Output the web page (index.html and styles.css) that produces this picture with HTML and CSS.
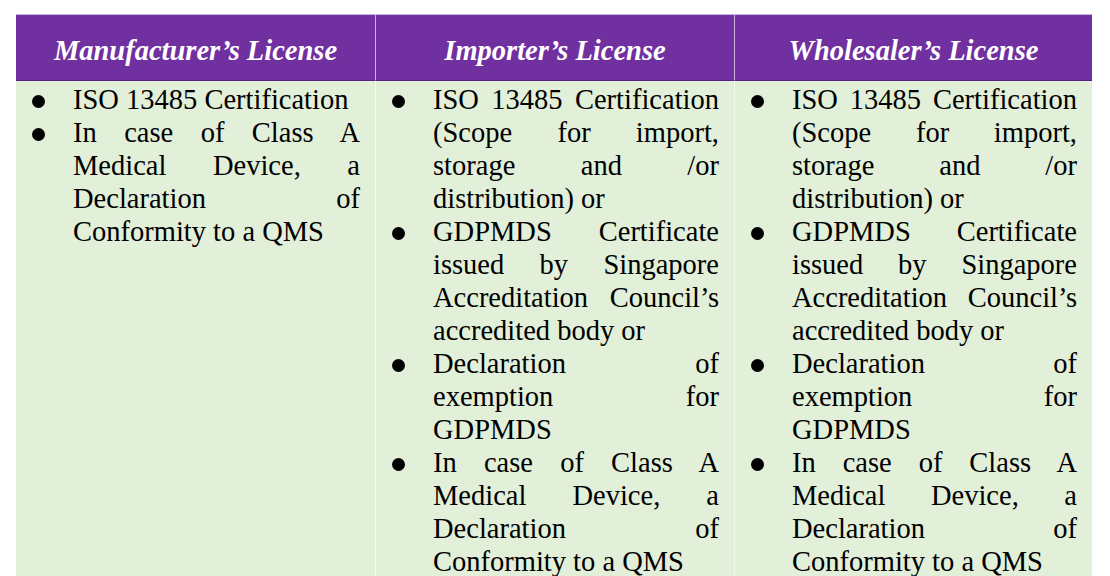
FILE: index.html
```html
<!DOCTYPE html>
<html lang="en">
<head>
<meta charset="utf-8">
<title>License Requirements</title>
<link rel="stylesheet" href="styles.css">
</head>
<body>
<div class="table">
  <div class="head">Manufacturer’s License</div>
  <div class="head sep">Importer’s License</div>
  <div class="head sep">Wholesaler’s License</div>

  <div class="cell">
    <ul class="list">
      <li>ISO 13485 Certification</li>
      <li>In case of Class A Medical Device, a Declaration of Conformity to a QMS</li>
    </ul>
  </div>
  <div class="cell sep">
    <ul class="list">
      <li>ISO 13485 Certification (Scope for import, storage and /or distribution) or</li>
      <li>GDPMDS Certificate issued by Singapore Accreditation Council’s accredited body or</li>
      <li>Declaration of exemption for GDPMDS</li>
      <li>In case of Class A Medical Device, a Declaration of Conformity to a QMS</li>
    </ul>
  </div>
  <div class="cell sep">
    <ul class="list">
      <li>ISO 13485 Certification (Scope for import, storage and /or distribution) or</li>
      <li>GDPMDS Certificate issued by Singapore Accreditation Council’s accredited body or</li>
      <li>Declaration of exemption for GDPMDS</li>
      <li>In case of Class A Medical Device, a Declaration of Conformity to a QMS</li>
    </ul>
  </div>
</div>
</body>
</html>
```
FILE: styles.css
```css
html, body {
  margin: 0;
  padding: 0;
  background: #ffffff;
  overflow: hidden;
}

body {
  font-family: "Liberation Serif", "Times New Roman", serif;
  color: #000000;
}

.table {
  display: grid;
  grid-template-columns: 359px 359px 358px;
  width: 1076px;
  margin: 14px 0 0 16px;
}

.head {
  background: #7030a0;
  color: #ffffff;
  font-weight: bold;
  font-style: italic;
  font-size: 28.5px;
  line-height: 33px;
  text-align: center;
  height: 67px;
  box-sizing: border-box;
  padding-top: 19px;
  border-top: 1px solid #c8b0de;
  border-bottom: 1px solid #55207e;
}

.head.sep {
  border-left: 1px solid #c9b2dc;
}

.cell {
  background: #e2efd9;
  padding: 2px 15px 0 16px;
  min-height: 520px;
}

.cell.sep {
  border-left: 1px solid #f4f8f1;
}

.list {
  list-style: none;
  margin: 0;
  padding: 0;
}

.list li {
  display: flex;
  font-size: 28.5px;
  line-height: 33px;
  text-align: justify;
}

.list li::before {
  content: "";
  flex: 0 0 13px;
  width: 13px;
  height: 13px;
  margin-top: 11.5px;
  margin-right: 28px;
  border-radius: 50%;
  background: #000000;
}
```
